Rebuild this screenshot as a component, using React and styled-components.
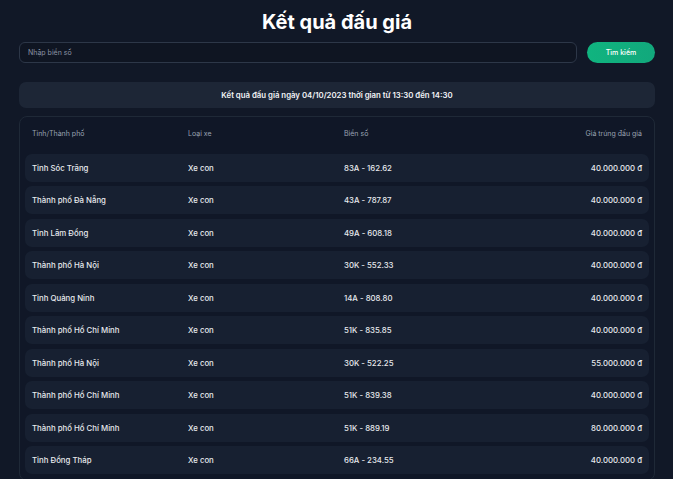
import React from "react";
import styled, { createGlobalStyle } from "styled-components";

const rows = [
  { city: "Tỉnh Sóc Trăng", type: "Xe con", plate: "83A - 162.62", price: "40.000.000 đ" },
  { city: "Thành phố Đà Nẵng", type: "Xe con", plate: "43A - 787.87", price: "40.000.000 đ" },
  { city: "Tỉnh Lâm Đồng", type: "Xe con", plate: "49A - 608.18", price: "40.000.000 đ" },
  { city: "Thành phố Hà Nội", type: "Xe con", plate: "30K - 552.33", price: "40.000.000 đ" },
  { city: "Tỉnh Quảng Ninh", type: "Xe con", plate: "14A - 808.80", price: "40.000.000 đ" },
  { city: "Thành phố Hồ Chí Minh", type: "Xe con", plate: "51K - 835.85", price: "40.000.000 đ" },
  { city: "Thành phố Hà Nội", type: "Xe con", plate: "30K - 522.25", price: "55.000.000 đ" },
  { city: "Thành phố Hồ Chí Minh", type: "Xe con", plate: "51K - 839.38", price: "40.000.000 đ" },
  { city: "Thành phố Hồ Chí Minh", type: "Xe con", plate: "51K - 889.19", price: "80.000.000 đ" },
  { city: "Tỉnh Đồng Tháp", type: "Xe con", plate: "66A - 234.55", price: "40.000.000 đ" },
];

const GlobalStyle = createGlobalStyle`
  * { box-sizing: border-box; }
  html, body {
    margin: 0;
    background: #111827;
    font-family: Inter, "Noto Sans", sans-serif;
    color: #f3f4f6;
  }
`;

const Page = styled.div`
  padding: 8px 18px 0 19px;
  display: flex;
  flex-direction: column;
`;

const Title = styled.h1`
  margin: 0;
  text-align: center;
  font-size: 20px;
  font-weight: 700;
  line-height: 28px;
  color: #ffffff;
`;

const SearchBar = styled.div`
  display: flex;
  gap: 10px;
  margin-top: 6px;
`;

const Input = styled.input`
  flex: 1;
  height: 21px;
  border: 1px solid #2d3748;
  border-radius: 6px;
  background: #0f1522;
  padding: 0 8px;
  font-family: inherit;
  font-size: 7px;
  color: #e5e7eb;
  outline: none;
  &::placeholder { color: #8a93a3; }
`;

const Button = styled.button`
  width: 68px;
  height: 21px;
  border: none;
  border-radius: 11px;
  background: linear-gradient(90deg, #10b47f, #12a87c);
  color: #ffffff;
  font-family: inherit;
  font-size: 7px;
  font-weight: 500;
`;

const Banner = styled.div`
  margin-top: 19px;
  height: 26px;
  border-radius: 7px;
  background: #1d2636;
  display: flex;
  align-items: center;
  justify-content: center;
  font-size: 7.8px;
  font-weight: 600;
  color: #f3f4f6;
`;

const Table = styled.div`
  margin-top: 8px;
  border: 1px solid #1f2937;
  border-radius: 8px;
  background: #101727;
  padding: 0 5px 6px;
  display: flex;
  flex-direction: column;
  gap: 4.5px;
`;

const Row = styled.div`
  display: grid;
  grid-template-columns: 156px 156px 1fr 1fr;
  align-items: center;
  padding: 0 7px;
  height: ${(p) => (p.$head ? "32px" : "28px")};
  border-radius: 7px;
  background: ${(p) => (p.$head ? "transparent" : "#172031")};
  font-size: ${(p) => (p.$head ? "7px" : "7.8px")};
  font-weight: ${(p) => (p.$head ? 400 : 500)};
  color: ${(p) => (p.$head ? "#9aa3b2" : "#e8eaee")};
`;

const Cell = styled.div`
  white-space: nowrap;
  text-align: ${(p) => (p.$right ? "right" : "left")};
`;

export default function App() {
  return (
    <>
      <GlobalStyle />
      <Page>
        <Title>Kết quả đấu giá</Title>
        <SearchBar>
          <Input placeholder="Nhập biển số" />
          <Button>Tìm kiếm</Button>
        </SearchBar>
        <Banner>Kết quả đấu giá ngày 04/10/2023 thời gian từ 13:30 đến 14:30</Banner>
        <Table>
          <Row $head>
            <Cell>Tỉnh/Thành phố</Cell>
            <Cell>Loại xe</Cell>
            <Cell>Biển số</Cell>
            <Cell $right>Giá trúng đấu giá</Cell>
          </Row>
          {rows.map((r, i) => (
            <Row key={i}>
              <Cell>{r.city}</Cell>
              <Cell>{r.type}</Cell>
              <Cell>{r.plate}</Cell>
              <Cell $right>{r.price}</Cell>
            </Row>
          ))}
        </Table>
      </Page>
    </>
  );
}
